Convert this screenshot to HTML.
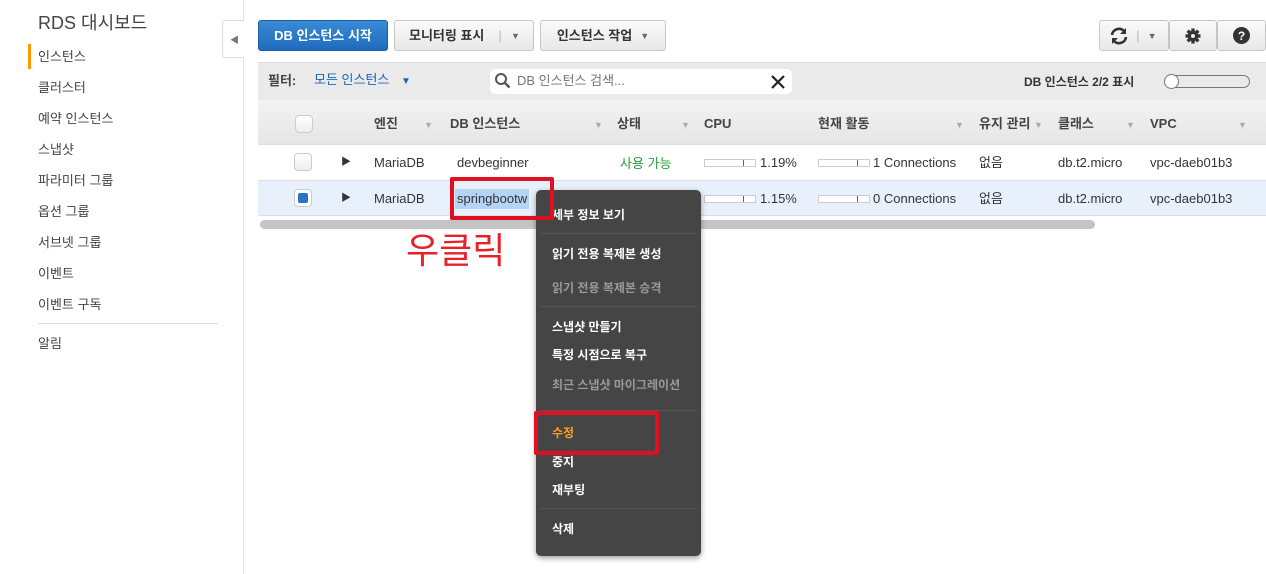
<!DOCTYPE html>
<html><head><meta charset="utf-8"><style>
*{box-sizing:border-box;margin:0;padding:0}
body{width:1266px;height:574px;background:#fff;position:relative;overflow:hidden;font-family:"Liberation Sans","Noto Sans CJK KR",sans-serif;color:#333;font-size:13px}
.a{position:absolute;white-space:nowrap;line-height:16px}
.nav{left:38px;font-size:13px;color:#444}
.btn{position:absolute;top:20px;height:31px;border:1px solid #c6c6c6;border-radius:3px;background:linear-gradient(#fafafa,#e8e8e8);font-weight:bold;font-size:13px;color:#333;display:flex;align-items:center;justify-content:center;line-height:16px}
.hd{top:116px;font-weight:bold;font-size:13px;color:#444}
.car{color:#aaa;font-size:9px}
.bar{position:absolute;height:8px;width:52px;border:1px solid #ccc;background:#fff}
.bar i{position:absolute;left:38px;top:0;width:1px;height:6px;background:#d33}
.cb{position:absolute;width:18px;height:18px;border:1px solid #ccc;border-radius:4px;background:linear-gradient(#fff,#eee)}
.mi{position:absolute;left:552px;font-weight:bold;font-size:12px;color:#fff;line-height:16px}
.mi.d{color:#999}
.sep{position:absolute;left:540px;width:157px;height:1px;background:#2a2a2a;border-bottom:1px solid #555}
</style></head><body>
<div class="a" style="left:38px;top:13px;font-size:18px;line-height:20px;color:#444">RDS 대시보드</div>
<div class="a" style="left:28px;top:44px;width:3px;height:25px;background:#f90"></div>
<div class="a nav" style="top:49px">인스턴스</div>
<div class="a nav" style="top:80px">클러스터</div>
<div class="a nav" style="top:111px">예약 인스턴스</div>
<div class="a nav" style="top:142px">스냅샷</div>
<div class="a nav" style="top:173px">파라미터 그룹</div>
<div class="a nav" style="top:204px">옵션 그룹</div>
<div class="a nav" style="top:235px">서브넷 그룹</div>
<div class="a nav" style="top:266px">이벤트</div>
<div class="a nav" style="top:297px">이벤트 구독</div>
<div class="a" style="left:38px;top:323px;width:180px;height:1px;background:#ddd"></div>
<div class="a nav" style="top:336px">알림</div>
<div class="a" style="left:243px;top:0;width:1px;height:574px;background:#e3e3e3"></div>
<div class="a" style="left:222px;top:20px;width:22px;height:38px;border:1px solid #ddd;border-right:none;border-radius:4px 0 0 4px;background:#fff;color:#777;font-size:9px;padding:11px 0 0 7px">◀</div>

<div class="btn" style="left:258px;width:130px;background:linear-gradient(#3a8ad6,#1f6cbc);border-color:#1a5fa8;color:#fff">DB 인스턴스 시작</div>
<div class="btn" style="left:394px;width:140px;justify-content:flex-start;padding-left:14px">모니터링 표시<span style="margin-left:14px;color:#ccc">|</span><span style="margin-left:9px;font-size:9px;color:#666">▼</span></div>
<div class="btn" style="left:540px;width:126px">인스턴스 작업<span style="margin-left:8px;font-size:9px;color:#666">▼</span></div>
<div class="btn" style="left:1099px;width:70px;justify-content:flex-start;padding-left:8px"><svg width="22" height="20" viewBox="0 0 22 20"><path d="M4 9a7 7 0 0 1 12-4" fill="none" stroke="#333" stroke-width="2.6"/><path d="M18 2v6h-6z" fill="#333"/><path d="M18 11a7 7 0 0 1-12 4" fill="none" stroke="#333" stroke-width="2.6"/><path d="M4 18v-6h6z" fill="#333"/></svg><span style="margin-left:6px;color:#ccc">|</span><span style="margin-left:8px;font-size:9px;color:#666">▼</span></div>
<div class="btn" style="left:1169px;width:48px"><svg width="16" height="16" viewBox="0 0 16 16"><g fill="#333"><circle cx="8" cy="8" r="5.2"/><rect x="6.3" y="0.5" width="3.4" height="15"/><rect x="0.5" y="6.3" width="15" height="3.4"/><rect x="6.3" y="0.5" width="3.4" height="15" transform="rotate(45 8 8)"/><rect x="6.3" y="0.5" width="3.4" height="15" transform="rotate(-45 8 8)"/></g><circle cx="8" cy="8" r="2" fill="#eee"/></svg></div>
<div class="btn" style="left:1217px;width:49px"><span style="width:17px;height:17px;border-radius:50%;background:#333;color:#fff;font-size:12px;display:flex;align-items:center;justify-content:center">?</span></div>

<div class="a" style="left:258px;top:62px;width:1008px;height:38px;background:#eaeaea;border-top:1px solid #ddd"></div>
<div class="a" style="left:268px;top:73px;font-weight:bold;color:#444">필터:</div>
<div class="a" style="left:314px;top:72px;color:#1a66b8">모든 인스턴스 <span style="font-size:10px;margin-left:8px">▼</span></div>
<div class="a" style="left:490px;top:69px;width:302px;height:25px;background:#fff;border-radius:5px"></div>
<svg class="a" style="left:494px;top:72px" width="18" height="18" viewBox="0 0 18 18"><circle cx="7" cy="7" r="5" fill="none" stroke="#555" stroke-width="2"/><path d="M10.5 10.5l5 5" stroke="#555" stroke-width="2.5"/></svg>
<div class="a" style="left:517px;top:73px;color:#777">DB 인스턴스 검색...</div>
<svg class="a" style="left:771px;top:75px" width="14" height="14" viewBox="0 0 14 14"><path d="M1 1l12 12M13 1L1 13" stroke="#222" stroke-width="2.2"/></svg>
<div class="a" style="left:1024px;top:74px;font-weight:bold;font-size:12px;color:#333">DB 인스턴스 2/2 표시</div>
<div class="a" style="left:1164px;top:75px;width:86px;height:13px;border:1px solid #777;border-radius:7px"></div>
<div class="a" style="left:1164px;top:74px;width:15px;height:15px;border:1px solid #777;border-radius:50%;background:#fff"></div>

<div class="a" style="left:258px;top:100px;width:1008px;height:45px;background:linear-gradient(#f2f2f2,#e6e6e6);border-bottom:1px solid #ddd"></div>
<div class="cb" style="left:295px;top:115px"></div>
<div class="a hd" style="left:374px">엔진</div><div class="a car" style="left:424px;top:117px">▼</div>
<div class="a hd" style="left:450px">DB 인스턴스</div><div class="a car" style="left:594px;top:117px">▼</div>
<div class="a hd" style="left:617px">상태</div><div class="a car" style="left:681px;top:117px">▼</div>
<div class="a hd" style="left:704px">CPU</div>
<div class="a hd" style="left:818px">현재 활동</div><div class="a car" style="left:955px;top:117px">▼</div>
<div class="a hd" style="left:979px">유지 관리</div><div class="a car" style="left:1034px;top:117px">▼</div>
<div class="a hd" style="left:1058px">클래스</div><div class="a car" style="left:1126px;top:117px">▼</div>
<div class="a hd" style="left:1150px">VPC</div><div class="a car" style="left:1238px;top:117px">▼</div>

<div class="a" style="left:258px;top:180px;width:1008px;height:36px;background:#e8f1fb;border-top:1px solid #dde;border-bottom:1px solid #dde"></div>
<div class="cb" style="left:294px;top:153px"></div>
<div class="cb" style="left:294px;top:189px;background:#fff"><div style="margin:3px;width:10px;height:10px;background:#2a73c8;border-radius:2px"></div></div>
<div class="a" style="left:341px;top:155px;font-size:10px">▶</div>
<div class="a" style="left:341px;top:191px;font-size:10px">▶</div>
<div class="a" style="left:374px;top:155px">MariaDB</div>
<div class="a" style="left:374px;top:191px">MariaDB</div>
<div class="a" style="left:457px;top:155px">devbeginner</div>
<div class="a" style="left:455px;top:189px;background:#b5d3f5;padding:2px 2px">springbootw</div>
<div class="a" style="left:620px;top:156px;color:#2b9a3c">사용 가능</div>
<div class="bar" style="left:704px;top:159px"><i></i></div><div class="a" style="left:760px;top:155px">1.19%</div>
<div class="bar" style="left:704px;top:195px"><i></i></div><div class="a" style="left:760px;top:191px">1.15%</div>
<div class="bar" style="left:818px;top:159px"><i></i></div><div class="a" style="left:873px;top:155px">1 Connections</div>
<div class="bar" style="left:818px;top:195px"><i></i></div><div class="a" style="left:873px;top:191px">0 Connections</div>
<div class="a" style="left:979px;top:155px">없음</div><div class="a" style="left:979px;top:191px">없음</div>
<div class="a" style="left:1058px;top:155px">db.t2.micro</div><div class="a" style="left:1058px;top:191px">db.t2.micro</div>
<div class="a" style="left:1150px;top:155px">vpc-daeb01b3</div><div class="a" style="left:1150px;top:191px">vpc-daeb01b3</div>
<div class="a" style="left:260px;top:220px;width:835px;height:9px;background:#c4c4c4;border-radius:5px"></div>

<div class="a" style="left:406px;top:228px;font-size:36px;line-height:40px;color:#e8202a;font-family:'Noto Sans CJK KR',sans-serif">우클릭</div>

<div class="a" style="left:536px;top:190px;width:165px;height:366px;background:#454545;border-radius:5px;box-shadow:0 2px 6px rgba(0,0,0,.4)"></div>
<div class="mi" style="top:207px">세부 정보 보기</div>
<div class="sep" style="top:233px"></div>
<div class="mi" style="top:246px">읽기 전용 복제본 생성</div>
<div class="mi d" style="top:280px">읽기 전용 복제본 승격</div>
<div class="sep" style="top:306px"></div>
<div class="mi" style="top:319px">스냅샷 만들기</div>
<div class="mi" style="top:347px">특정 시점으로 복구</div>
<div class="mi d" style="top:377px">최근 스냅샷 마이그레이션</div>
<div class="sep" style="top:410px"></div>
<div class="mi" style="top:425px;color:#f7a21b">수정</div>
<div class="mi" style="top:454px">중지</div>
<div class="mi" style="top:482px">재부팅</div>
<div class="sep" style="top:508px"></div>
<div class="mi" style="top:521px">삭제</div>

<div class="a" style="left:450px;top:177px;width:104px;height:43px;border:4px solid #e01020;border-radius:2px"></div>
<div class="a" style="left:534px;top:411px;width:125px;height:44px;border:4px solid #e01020;border-radius:2px"></div>
</body></html>
